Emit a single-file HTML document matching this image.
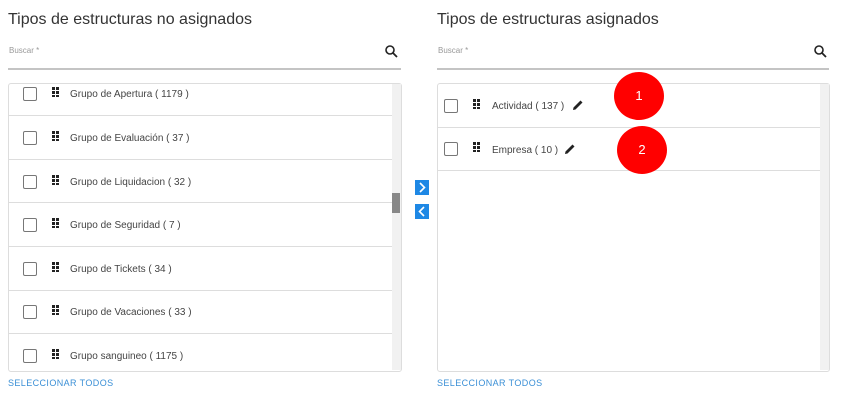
<!DOCTYPE html><html><head><style>
body{margin:0;width:842px;height:403px;background:#fff;font-family:"Liberation Sans",sans-serif;position:relative;overflow:hidden}
.a{position:absolute}
.t{font-size:16px;color:#333}
.lb{font-size:8px;color:#999}
.ul{height:2px;background:#c4c4c4}
.box{border:1px solid #ddd;border-radius:3px;overflow:hidden}
.sb{background:#f1f1f1;width:9px}
.sep{height:1px;background:#ddd}
.cb{width:12px;height:12px;border:1px solid #777;border-radius:2px;background:#fff}
.g{width:7px;height:10px;background:
linear-gradient(#222,#222) 0 0/3px 3px,linear-gradient(#222,#222) 4px 0/3px 3px,
linear-gradient(#222,#222) 0 4px/3px 3px,linear-gradient(#222,#222) 4px 4px/3px 3px,
linear-gradient(#222,#222) 0 8px/3px 2px,linear-gradient(#222,#222) 4px 8px/3px 2px;background-repeat:no-repeat}
.tx{font-size:10px;color:#444;line-height:12px}
.sel{font-size:9px;color:#3a8fd6;letter-spacing:0.4px}
.btn{width:14px;height:15px;background:#1e88e5}
.c{width:50px;height:48px;border-radius:50%;background:#f00;color:#fff;font-size:13px;text-align:center;line-height:48px}
</style></head><body>
<div class="a t" style="left:8px;top:11px">Tipos de estructuras no asignados</div>
<div class="a t" style="left:437px;top:11px">Tipos de estructuras asignados</div>
<div class="a lb" style="left:9px;top:46px">Buscar *</div>
<div class="a lb" style="left:438px;top:46px">Buscar *</div>
<svg class="a" style="left:385px;top:45px" width="13" height="13"><circle cx="5" cy="5" r="4" fill="none" stroke="#222" stroke-width="1.6"/><line x1="8" y1="8" x2="12" y2="12" stroke="#222" stroke-width="1.8"/></svg>
<svg class="a" style="left:814px;top:45px" width="13" height="13"><circle cx="5" cy="5" r="4" fill="none" stroke="#222" stroke-width="1.6"/><line x1="8" y1="8" x2="12" y2="12" stroke="#222" stroke-width="1.8"/></svg>
<div class="a ul" style="left:8px;top:68px;width:393px"></div>
<div class="a ul" style="left:437px;top:68px;width:392px"></div>

<div class="a box" style="left:8px;top:83px;width:392px;height:287px"></div>
<div class="a sb" style="left:392px;top:84px;height:286px"></div>
<div class="a" style="left:392px;top:193px;width:8px;height:20px;background:#888"></div>
<div class="a box" style="left:437px;top:83px;width:391px;height:287px"></div>
<div class="a sb" style="left:820px;top:84px;height:286px"></div>

<div class="a sep" style="left:9px;top:115px;width:383px"></div>
<div class="a sep" style="left:9px;top:159px;width:383px"></div>
<div class="a sep" style="left:9px;top:202px;width:383px"></div>
<div class="a sep" style="left:9px;top:246px;width:383px"></div>
<div class="a sep" style="left:9px;top:290px;width:383px"></div>
<div class="a sep" style="left:9px;top:333px;width:383px"></div>
<div class="a sep" style="left:438px;top:127px;width:382px"></div>
<div class="a sep" style="left:438px;top:170px;width:382px"></div>

<div class="a cb" style="left:23px;top:87px"></div><div class="a g" style="left:52px;top:87px"></div><div class="a tx" style="left:70px;top:89px">Grupo de Apertura ( 1179 )</div>
<div class="a cb" style="left:23px;top:131px"></div><div class="a g" style="left:52px;top:131px"></div><div class="a tx" style="left:70px;top:133px">Grupo de Evaluación ( 37 )</div>
<div class="a cb" style="left:23px;top:175px"></div><div class="a g" style="left:52px;top:175px"></div><div class="a tx" style="left:70px;top:177px">Grupo de Liquidacion ( 32 )</div>
<div class="a cb" style="left:23px;top:218px"></div><div class="a g" style="left:52px;top:218px"></div><div class="a tx" style="left:70px;top:220px">Grupo de Seguridad ( 7 )</div>
<div class="a cb" style="left:23px;top:262px"></div><div class="a g" style="left:52px;top:262px"></div><div class="a tx" style="left:70px;top:264px">Grupo de Tickets ( 34 )</div>
<div class="a cb" style="left:23px;top:305px"></div><div class="a g" style="left:52px;top:305px"></div><div class="a tx" style="left:70px;top:307px">Grupo de Vacaciones ( 33 )</div>
<div class="a cb" style="left:23px;top:349px"></div><div class="a g" style="left:52px;top:349px"></div><div class="a tx" style="left:70px;top:351px">Grupo sanguineo ( 1175 )</div>

<div class="a cb" style="left:444px;top:99px"></div><div class="a g" style="left:473px;top:99px"></div><div class="a tx" style="left:492px;top:101px">Actividad ( 137 )</div>
<svg class="a" style="left:572px;top:99px" width="12" height="12"><path d="M1 11 L1.5 8.5 L8.5 1.5 L10.5 3.5 L3.5 10.5 Z" fill="#222"/></svg>
<div class="a cb" style="left:444px;top:142px"></div><div class="a g" style="left:473px;top:142px"></div><div class="a tx" style="left:492px;top:145px">Empresa ( 10 )</div>
<svg class="a" style="left:564px;top:143px" width="12" height="12"><path d="M1 11 L1.5 8.5 L8.5 1.5 L10.5 3.5 L3.5 10.5 Z" fill="#222"/></svg>

<svg class="a btn" style="left:415px;top:180px" width="14" height="15"><path d="M5 3 L9.5 7.5 L5 12" fill="none" stroke="#fff" stroke-width="1.6"/></svg>
<svg class="a btn" style="left:415px;top:204px" width="14" height="15"><path d="M9 3 L4.5 7.5 L9 12" fill="none" stroke="#fff" stroke-width="1.6"/></svg>

<div class="a c" style="left:614px;top:72px">1</div>
<div class="a c" style="left:617px;top:126px">2</div>

<div class="a sel" style="left:8px;top:378px">SELECCIONAR TODOS</div>
<div class="a sel" style="left:437px;top:378px">SELECCIONAR TODOS</div>
</body></html>
